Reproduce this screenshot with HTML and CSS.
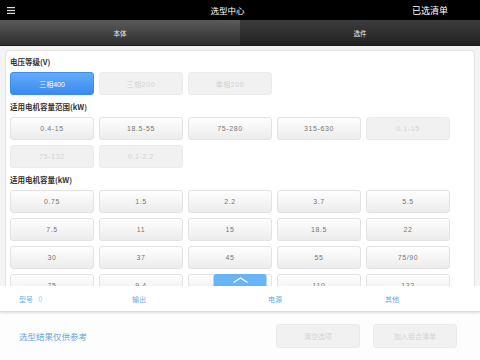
FILE: index.html
```html
<!DOCTYPE html>
<html lang="zh-CN">
<head>
	<meta charset="UTF-8">
	<meta name="viewport" content="width=device-width, initial-scale=1" />
	<title>选型中心</title>
	<link rel="stylesheet" href="styles.css">
</head>
<body>

<header class="topbar">
	<span class="menu">
		<svg width="8" height="7" viewBox="0 0 8 7"><rect y="0" width="8" height="1.2" fill="#ddd"/><rect y="2.9" width="8" height="1.2" fill="#ddd"/><rect y="5.8" width="8" height="1.2" fill="#ddd"/></svg>
	</span>
	<h1 class="title">选型中心</h1>
	<span class="cart">已选清单</span>
</header>

<nav class="tabs">
	<div class="tab active">本体</div>
	<div class="tab">选件</div>
</nav>

<main class="scroll">
	<div class="card">
		<section class="group">
			<h3>电压等级(V)</h3>
			<div class="options">
				<button class="opt selected" type="button">三相400</button>
				<button class="opt" disabled type="button">三相200</button>
				<button class="opt" disabled type="button">单相200</button>
			</div>
		</section>
		<section class="group">
			<h3>适用电机容量范围(kW)</h3>
			<div class="options">
				<button class="opt" type="button">0.4-15</button>
				<button class="opt" type="button">18.5-55</button>
				<button class="opt" type="button">75-280</button>
				<button class="opt" type="button">315-630</button>
				<button class="opt" disabled type="button">0.1-15</button>
				<button class="opt" disabled type="button">75-132</button>
				<button class="opt" disabled type="button">0.1-2.2</button>
			</div>
		</section>
		<section class="group">
			<h3>适用电机容量(kW)</h3>
			<div class="options">
				<button class="opt" type="button">0.75</button>
				<button class="opt" type="button">1.5</button>
				<button class="opt" type="button">2.2</button>
				<button class="opt" type="button">3.7</button>
				<button class="opt" type="button">5.5</button>
				<button class="opt" type="button">7.5</button>
				<button class="opt" type="button">11</button>
				<button class="opt" type="button">15</button>
				<button class="opt" type="button">18.5</button>
				<button class="opt" type="button">22</button>
				<button class="opt" type="button">30</button>
				<button class="opt" type="button">37</button>
				<button class="opt" type="button">45</button>
				<button class="opt" type="button">55</button>
				<button class="opt" type="button">75/90</button>
				<button class="opt" type="button">75</button>
				<button class="opt" type="button">9.4</button>
				<button class="opt" type="button">93</button>
				<button class="opt" type="button">110</button>
				<button class="opt" type="button">132</button>
			</div>
		</section>
	</div>
	<button class="handle" type="button">
		<svg width="16" height="6" viewBox="0 0 16 6"><path d="M1 5.5 L8 1 L15 5.5" fill="none" stroke="#fff" stroke-width="1.2"/></svg>
	</button>
</main>

<nav class="subtabs">
	<span class="sub">型号 <i>0</i></span>
	<span class="sub">输出</span>
	<span class="sub">电源</span>
	<span class="sub">其他</span>
</nav>

<footer class="actions">
	<span class="note">选型结果仅供参考</span>
	<button class="btn" disabled type="button">清空选项</button>
	<button class="btn" disabled type="button">加入组合清单</button>
</footer>

</body>
</html>
```

FILE: styles.css
```css
html, body {
	margin: 0;
	height: 100%;
}
body {
	display: flex;
	flex-direction: column;
	height: 360px;
	overflow: hidden;
	font-family: "Noto Sans CJK SC", "Noto Sans", sans-serif;
	background: #fdfdfd;
}
button {
	font-family: inherit;
}

.topbar {
	display: grid;
	grid-template-columns: 1fr auto 1fr;
	align-items: center;
	height: 20px;
	padding: 0 32px 0 7px;
	background: #000;
	color: #fff;
}
.menu {
	display: flex;
}
.title {
	margin: 0;
	font-size: 8.5px;
	font-weight: normal;
}
.cart {
	justify-self: end;
	font-size: 9px;
}

.tabs {
	display: grid;
	grid-template-columns: 1fr 1fr;
	height: 25px;
	border-bottom: 1px solid #1a1a1a;
}
.tab {
	display: flex;
	align-items: center;
	justify-content: center;
	font-size: 6.5px;
	color: #eee;
	background: linear-gradient(#3c3c3c, #222);
}
.tab.active {
	background: linear-gradient(#5a5a5a, #2e2e2e);
}

.scroll {
	position: relative;
	flex: 1;
	min-height: 0;
	overflow: hidden;
	background: #f4f4f4;
	padding: 4px 5px 0;
}
.card {
	background: #fff;
	border: 1px solid #e2e2e2;
	border-radius: 4px;
	padding: 5px 24px 0 4px;
}
.group {
	margin-bottom: 6px;
}
.group h3 {
	margin: 0 0 4px;
	height: 12px;
	line-height: 12px;
	font-size: 7.5px;
	font-weight: bold;
	color: #333;
}
.options {
	display: grid;
	grid-template-columns: repeat(5, 84px);
	grid-auto-rows: 23px;
	gap: 5px;
}
.opt {
	margin: 0;
	padding: 0;
	border: 1px solid #e3e3e3;
	border-radius: 3px;
	background: linear-gradient(#fefefe, #ececec);
	font-family: "Liberation Sans", "Noto Sans CJK SC", sans-serif;
	font-size: 7px;
	letter-spacing: 0.6px;
	color: #777;
}
.opt:disabled {
	background: #f1f1f1;
	border-color: #ebebeb;
	color: #d2d2d2;
}
.opt.selected {
	background: linear-gradient(#62adf9, #3b89f1);
	border-color: #3d8cf2;
	color: #fff;
	letter-spacing: 0;
}

.handle {
	position: absolute;
	bottom: 0;
	left: 50%;
	transform: translateX(-50%);
	width: 53px;
	height: 12px;
	padding: 0;
	border: 0;
	border-radius: 3px 3px 0 0;
	background: #68b5f6;
	display: flex;
	align-items: center;
	justify-content: center;
}

.subtabs {
	display: grid;
	grid-template-columns: 113px 136px 117px 1fr;
	align-items: center;
	height: 25px;
	padding-left: 19px;
	background: #fff;
	border-bottom: 1px solid #dcdcdc;
	box-shadow: 0 1px 2px rgba(0, 0, 0, 0.12);
	position: relative;
	font-size: 7px;
	color: #6aaee6;
}
.sub i {
	font-style: normal;
	color: #a9cdec;
	margin-left: 4px;
}

.actions {
	display: flex;
	align-items: center;
	gap: 13px;
	height: 48px;
	padding: 0 23px 0 19px;
	background: #fdfdfd;
}
.note {
	flex: 1;
	font-size: 8.5px;
	color: #5fa6e4;
}
.btn {
	width: 84px;
	height: 24px;
	border: 1px solid #ebebeb;
	border-radius: 3px;
	background: #f1f1f1;
	font-size: 7px;
	color: #d4d4d4;
}
```
